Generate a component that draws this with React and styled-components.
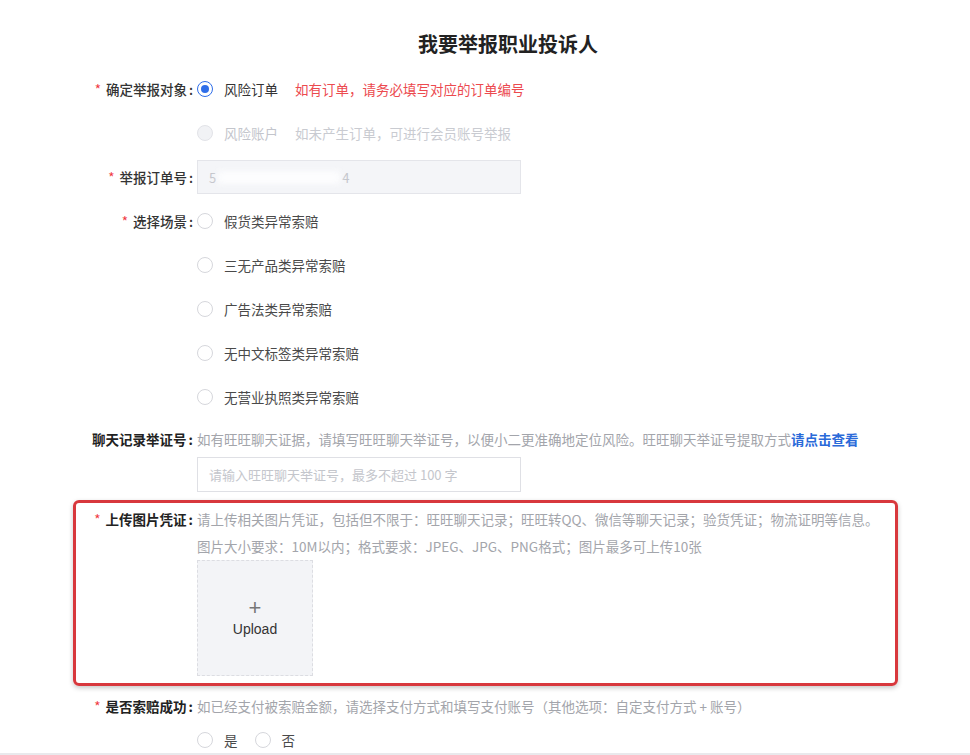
import React from "react";
import styled, { createGlobalStyle } from "styled-components";

const GlobalStyle = createGlobalStyle`
	* {
		box-sizing: border-box;
	}
	body {
		margin: 0;
		background: #fff;
		font-family: "Noto Sans CJK SC", "Noto Sans", sans-serif;
		font-size: 13.5px;
		color: #333;
	}
`

const Page = styled.div`
	width: 970px;
	height: 755px;
	overflow: hidden;
	padding-top: 30px;
	border-bottom: 2px solid #e9e9ec;
`

const Title = styled.h1`
	margin: 0 0 9px;
	text-align: center;
	font-size: 20px;
	line-height: 28px;
	font-weight: 700;
	color: #222;
	padding-left: 46px;
`

const Form = styled.form`
	display: flex;
	flex-direction: column;
`

const Field = styled.div`
	display: grid;
	grid-template-columns: ${p => p.$labelWidth || 197}px 1fr;
	align-items: start;
	margin-top: ${p => p.$top || 0}px;
`

const Label = styled.label`
	text-align: right;
	padding-right: 4px;
	line-height: ${p => p.$line || 44}px;
	font-weight: ${p => p.$strong ? 700 : 500};
	color: ${p => p.$strong ? "#222" : "#333"};
	white-space: nowrap;
	&::after {
		content: ":";
		margin-left: 2px;
	}
`

const Star = styled.span`
	color: #f0353d;
	font-weight: 400;
	margin-right: 5px;
`

const Content = styled.div`
	display: flex;
	flex-direction: column;
`

const Line = styled.div`
	display: flex;
	align-items: center;
	height: ${p => p.$h || 44}px;
	margin-top: ${p => p.$top || 0}px;
	white-space: nowrap;
`

const Option = styled.span`
	display: inline-flex;
	align-items: center;
	margin-right: 17px;
	color: ${p => p.$disabled ? "#c3c5cc" : p.$muted ? "#4a4a4a" : "#333"};
`

const Dot = styled.span`
	width: 16px;
	height: 16px;
	border-radius: 50%;
	margin-right: 11px;
	flex-shrink: 0;
	border: 1px solid ${p => p.$checked ? "#2f6ee9" : p.$disabled ? "#e2e3e8" : "#d6d7dc"};
	background: ${p => p.$disabled ? "#f1f2f5" : "#fff"};
	display: flex;
	align-items: center;
	justify-content: center;
	&::after {
		content: "";
		display: ${p => p.$checked ? "block" : "none"};
		width: 8px;
		height: 8px;
		border-radius: 50%;
		background: #2f6ee9;
	}
`

const Hint = styled.span`
	color: ${p => p.$tone === "red" ? "#ec4a4f" : p.$tone === "faint" ? "#c9cbd1" : "#a3a5ab"};
	line-height: ${p => p.$line || 24}px;
	white-space: nowrap;
`

const Link = styled.a`
	color: #2a6ad9;
	font-weight: 700;
	text-decoration: none;
`

const InputBox = styled.div`
	width: 324px;
	height: ${p => p.$h || 34}px;
	margin-top: ${p => p.$top || 0}px;
	border: 1px solid ${p => p.$disabled ? "#e4e5ea" : "#dfe0e5"};
	background: ${p => p.$disabled ? "#f4f5f8" : "#fff"};
	display: flex;
	align-items: center;
	padding-left: 11px;
	color: #c4c6cc;
	font-size: 13px;
`

/* blurred-out middle digits of the order number */
const Masked = styled.span`
	display: inline-block;
	width: 122px;
	height: 13px;
	margin: 0 2px;
	background: #fdfdfe;
	filter: blur(3px);
`

const Highlight = styled.div`
	margin: 8px 0 0 73px;
	width: 825px;
	border: 3px solid #d8383d;
	border-radius: 6px;
	box-shadow: 0 2px 5px rgba(0, 0, 0, 0.22);
	padding: 3px 0 7px;
`

const UploadBox = styled.div`
	width: 116px;
	height: 116px;
	background: #f3f4f7;
	border: 1px dashed #dcdde2;
	display: flex;
	flex-direction: column;
	align-items: center;
	justify-content: center;
	font-family: "Liberation Sans", Arial, sans-serif;
	color: #333;
	font-size: 14px;
`

const Plus = styled.span`
	font-size: 22px;
	line-height: 18px;
	color: #777;
	font-weight: 300;
	margin-bottom: 4px;
`

const scenes = ["假货类异常索赔", "三无产品类异常索赔", "广告法类异常索赔", "无中文标签类异常索赔", "无营业执照类异常索赔"]

export default function App() {
	return (
		<Page>
			<GlobalStyle />
			<Title>我要举报职业投诉人</Title>
			<Form>
				<Field>
					<Label><Star>*</Star>确定举报对象</Label>
					<Content>
						<Line>
							<Option><Dot $checked />风险订单</Option>
							<Hint $tone="red">如有订单，请务必填写对应的订单编号</Hint>
						</Line>
						<Line>
							<Option $disabled><Dot $disabled />风险账户</Option>
							<Hint $tone="faint">如未产生订单，可进行会员账号举报</Hint>
						</Line>
					</Content>
				</Field>
				<Field>
					<Label><Star>*</Star>举报订单号</Label>
					<Line>
						<InputBox $disabled>5<Masked />4</InputBox>
					</Line>
				</Field>
				<Field>
					<Label><Star>*</Star>选择场景</Label>
					<Content>
						{scenes.map(s => (
							<Line key={s}>
								<Option $muted><Dot />{s}</Option>
							</Line>
						))}
					</Content>
				</Field>
				<Field $top={8}>
					<Label $line={24} $strong>聊天记录举证号</Label>
					<Content>
						<Hint>如有旺旺聊天证据，请填写旺旺聊天举证号，以便小二更准确地定位风险。旺旺聊天举证号提取方式<Link>请点击查看</Link></Hint>
						<InputBox $top={6} $h={35}>请输入旺旺聊天举证号，最多不超过 100 字</InputBox>
					</Content>
				</Field>
				<Highlight>
					<Field $labelWidth={121}>
						<Label $line={27} $strong><Star>*</Star>上传图片凭证</Label>
						<Content>
							<Hint $line={27}>请上传相关图片凭证，包括但不限于：旺旺聊天记录；旺旺转QQ、微信等聊天记录；验货凭证；物流证明等信息。</Hint>
							<Hint $line={27}>图片大小要求：10M以内；格式要求：JPEG、JPG、PNG格式；图片最多可上传10张</Hint>
							<UploadBox>
								<Plus>+</Plus>
								Upload
							</UploadBox>
						</Content>
					</Field>
				</Highlight>
				<Field $top={8}>
					<Label $line={24} $strong><Star>*</Star>是否索赔成功</Label>
					<Content>
						<Hint>如已经支付被索赔金额，请选择支付方式和填写支付账号（其他选项：自定支付方式 + 账号）</Hint>
						<Line $h={24} $top={10}>
							<Option $muted><Dot />是</Option>
							<Option $muted><Dot />否</Option>
						</Line>
					</Content>
				</Field>
			</Form>
		</Page>
	)
}
